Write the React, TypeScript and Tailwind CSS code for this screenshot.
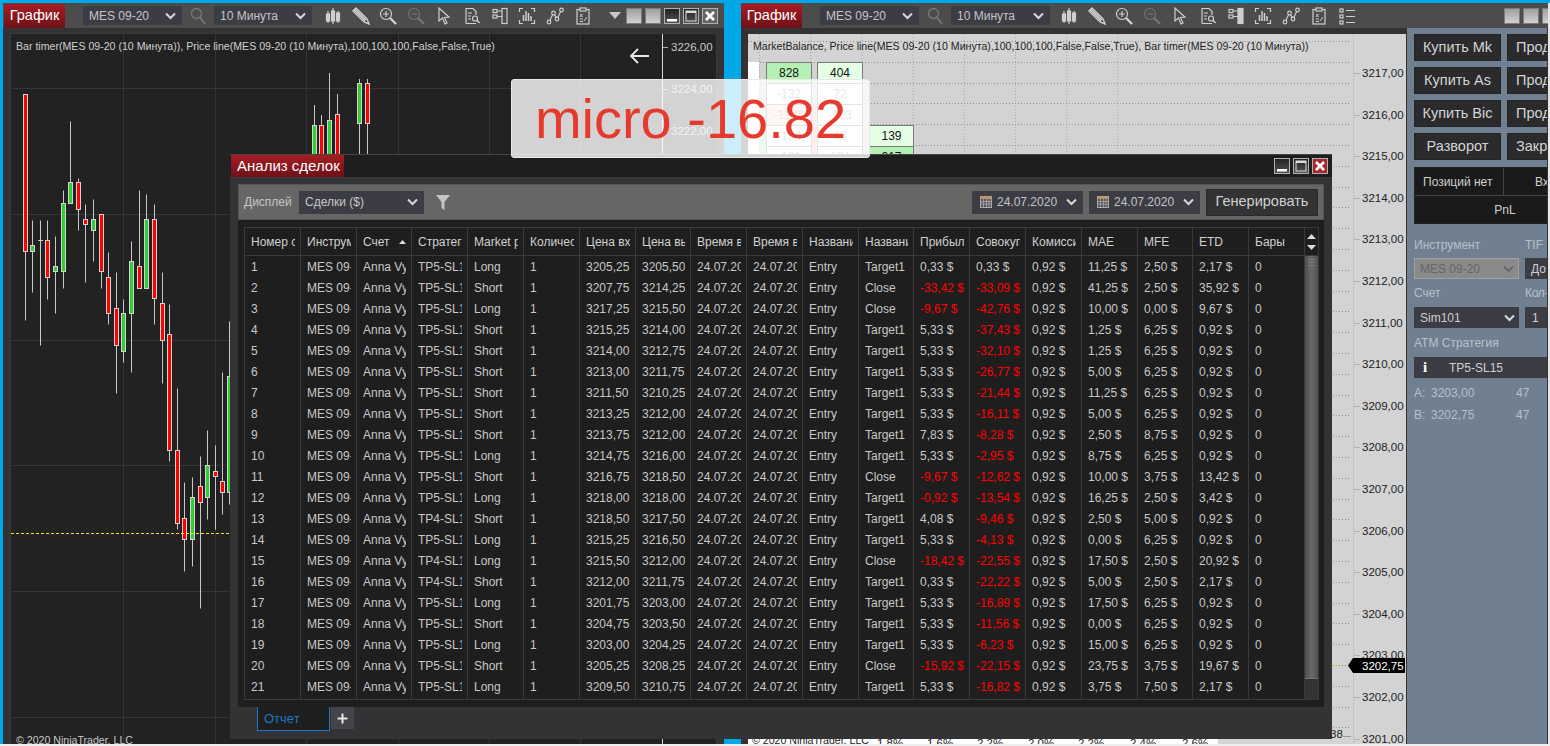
import React from "react";

const FONT = "font-['Liberation_Sans',Arial,sans-serif]";
const Y = (z: number) => Math.round(80 + z / 2.904) + 0.5;

// x, wickTop, wickBottom, bodyTop, bodyBottom, up (zoom units for y)
const candles: [number, number, number, number, number, number][] = [
  [25, 40, 696, 40, 497, 0], [32, 407, 617, 480, 497, 1], [47, 407, 635, 466, 573, 0],
  [55, 453, 678, 541, 556, 1], [63, 318, 603, 358, 556, 1], [70, 119, 358, 297, 358, 1],
  [78, 285, 437, 297, 376, 0], [85, 360, 588, 405, 419, 0], [93, 346, 527, 405, 437, 1],
  [101, 390, 603, 390, 556, 0], [108, 499, 710, 573, 678, 0], [116, 558, 908, 663, 770, 0],
  [123, 636, 818, 678, 786, 1], [131, 467, 848, 527, 678, 1], [139, 318, 603, 541, 603, 0],
  [146, 331, 603, 405, 603, 1], [154, 360, 710, 405, 634, 0], [162, 558, 880, 649, 756, 0],
  [169, 650, 1105, 739, 1075, 0], [177, 894, 1303, 1075, 1287, 0], [184, 1167, 1425, 1273, 1334, 0],
  [192, 1153, 1410, 1212, 1334, 1], [200, 1092, 1532, 1180, 1226, 0], [207, 1017, 1275, 1119, 1212, 1],
  [215, 1060, 1303, 1136, 1151, 0], [222, 848, 1259, 1165, 1197, 0], [229, 700, 1230, 860, 1197, 1],
];
const topCandles: [number, number, number, number][] = [
  [314, 105, 125, 1], [321, 115, 125, 0], [329, 73, 120, 1], [337, 94, 114, 0], [359, 79, 83, 1], [367, 79, 83, 0],
];

const rows: string[][] = [
  ["Long", "TP5", "3205,25", "3205,50", "Target1", "0,33", "0,33", "11,25", "2,50", "2,17"],
  ["Short", "TP5", "3207,75", "3214,25", "Close", "-33,42", "-33,09", "41,25", "2,50", "35,92"],
  ["Long", "TP5", "3217,25", "3215,50", "Close", "-9,67", "-42,76", "10,00", "0,00", "9,67"],
  ["Short", "TP5", "3215,25", "3214,00", "Target1", "5,33", "-37,43", "1,25", "6,25", "0,92"],
  ["Short", "TP5", "3214,00", "3212,75", "Target1", "5,33", "-32,10", "1,25", "6,25", "0,92"],
  ["Short", "TP5", "3213,00", "3211,75", "Target1", "5,33", "-26,77", "5,00", "6,25", "0,92"],
  ["Short", "TP5", "3211,50", "3210,25", "Target1", "5,33", "-21,44", "11,25", "6,25", "0,92"],
  ["Short", "TP5", "3213,25", "3212,00", "Target1", "5,33", "-16,11", "5,00", "6,25", "0,92"],
  ["Short", "TP5", "3213,75", "3212,00", "Target1", "7,83", "-8,28", "2,50", "8,75", "0,92"],
  ["Long", "TP5", "3214,75", "3216,00", "Target1", "5,33", "-2,95", "8,75", "6,25", "0,92"],
  ["Short", "TP5", "3216,75", "3218,50", "Close", "-9,67", "-12,62", "10,00", "3,75", "13,42"],
  ["Long", "TP5", "3218,00", "3218,00", "Target1", "-0,92", "-13,54", "16,25", "2,50", "3,42"],
  ["Short", "TP4", "3218,50", "3217,50", "Target1", "4,08", "-9,46", "2,50", "5,00", "0,92"],
  ["Long", "TP5", "3215,25", "3216,50", "Target1", "5,33", "-4,13", "0,00", "6,25", "0,92"],
  ["Long", "TP4", "3215,50", "3212,00", "Close", "-18,42", "-22,55", "17,50", "2,50", "20,92"],
  ["Short", "TP4", "3212,00", "3211,75", "Target1", "0,33", "-22,22", "5,00", "2,50", "2,17"],
  ["Long", "TP5", "3201,75", "3203,00", "Target1", "5,33", "-16,89", "17,50", "6,25", "0,92"],
  ["Short", "TP5", "3204,75", "3203,50", "Target1", "5,33", "-11,56", "0,00", "6,25", "0,92"],
  ["Long", "TP5", "3203,00", "3204,25", "Target1", "5,33", "-6,23", "15,00", "6,25", "0,92"],
  ["Short", "TP5", "3205,25", "3208,25", "Close", "-15,92", "-22,15", "23,75", "3,75", "19,67"],
  ["Long", "TP5", "3209,50", "3210,75", "Target1", "5,33", "-16,82", "3,75", "7,50", "2,17"],
];

const headers = ["Номер сделки", "Инструмент", "Счет", "Стратегия", "Market pos.", "Количество", "Цена входа", "Цена выхода", "Время входа", "Время выхода", "Название входа", "Название выхода", "Прибыль", "Совокупная", "Комиссия", "MAE", "MFE", "ETD", "Бары"];

const GRID = "grid grid-cols-[56px_56px_55px_56px_56px_56px_56px_55px_56px_56px_56px_55px_56px_56px_56px_56px_55px_56px_56px_13px]";

const Cell = ({ v, red }: { v: string; red?: boolean }) => (
  <div className={`h-[21px] border-r border-[#3a3a3a] pl-[6px] pr-[5px] pt-px leading-[21px] ${red ? "text-[#ff0000]" : "text-[#c8c8c8]"}`}>
    <div className="overflow-hidden whitespace-nowrap">{v}</div>
  </div>
);

const Chevron = ({ c = "#d8d8d8" }: { c?: string }) => (
  <svg width="11" height="8" viewBox="0 0 11 8" className="shrink-0"><path d="M1 1.5 L5.5 6 L10 1.5" fill="none" stroke={c} strokeWidth="2" /></svg>
);

const Select = ({ text, w }: { text: string; w: string }) => (
  <div className={`${w} h-[19px] shrink-0 bg-[#3c3c44] flex items-center pl-[6px] pr-[6px] text-[12px] text-[#c4c4c4] justify-between`}>
    <span className="whitespace-nowrap">{text}</span>
    <Chevron />
  </div>
);

const DateBox = () => (
  <div className="w-[111px] h-[23px] bg-[#3c3c44] flex items-center pl-[8px] pr-[6px] text-[12px] text-[#c4c4c4]">
    <svg width="12" height="12" viewBox="0 0 12 12" className="shrink-0">
      <rect x="0.5" y="0.5" width="11" height="11" fill="#55555c" stroke="#aaa" />
      <rect x="0.5" y="0.5" width="11" height="2.5" fill="#c09060" />
      <path d="M0 5.5H12M0 8H12M3.5 3V12M6.5 3V12M9 3V12" stroke="#aaa" strokeWidth="0.8" />
    </svg>
    <span className="whitespace-nowrap ml-[5px]">24.07.2020</span>
    <span className="ml-auto"><Chevron /></span>
  </div>
);

const S = "none";
const ic = { fill: S, stroke: "#cfcfcf", strokeWidth: 1.2 };
const Icon = ({ children, dim }: { children: React.ReactNode; dim?: boolean }) => (
  <div className="w-[27.8px] flex justify-center shrink-0">
    <svg width="18" height="18" viewBox="0 0 18 18" className={dim ? "opacity-30" : ""} {...ic}>{children}</svg>
  </div>
);
const Bars = () => <Icon><path d="M4 4V16M9 1V17M14 4V16" /><rect x="2.5" y="7" width="3" height="7" fill="#cfcfcf" /><rect x="7.5" y="4" width="3" height="10" fill="#cfcfcf" /><rect x="12.5" y="6" width="3" height="8" fill="#cfcfcf" /></Icon>;
const Pencil = () => <Icon><path d="M1 4 L4 1 L15 12 L17 17 L12 15 Z" strokeWidth="1.4" /><path d="M3 2 L14 13 M2 3 L13 14" /></Icon>;
const ZoomIn = () => <Icon><circle cx="7" cy="7" r="5.5" /><path d="M4 7H10M7 4V10" /><path d="M11 11 L17 17" strokeWidth="2.4" /></Icon>;
const ZoomOut = () => <Icon dim><circle cx="7" cy="7" r="5.5" /><path d="M4 7H10" /><path d="M11 11 L17 17" strokeWidth="2.4" /></Icon>;
const Cursor = () => <Icon><path d="M4 1 L4 14 L7.5 11 L10 17 L12 16 L9.5 10.5 L14 10 Z" /></Icon>;
const DocSearch = () => <Icon><path d="M3 16.5 V1.5 H10 L13 4.5 V8 M3 16.5 H13" /><path d="M5 6H9M5 9H8M5 12H8" /><circle cx="12" cy="11.5" r="2.5" /><path d="M14 13.5 L16.5 16" strokeWidth="1.6" /></Icon>;
const Panels = ({ fill }: { fill?: boolean }) => <Icon><rect x="11" y="1.5" width="5" height="15" fill={fill ? "#cfcfcf" : "none"} /><rect x="2" y="2.5" width="4" height="3" /><rect x="2" y="8" width="4" height="3" /><path d="M6 4H11M6 9.5H11" /></Icon>;
const BracketBars = () => <Icon><path d="M1.5 5V1.5H5M13 1.5H16.5V5M1.5 13V16.5H5M13 16.5H16.5V13" /><path d="M5.5 14V8M8 14V4M10.5 14V6M13 14V9" strokeWidth="1.5" /></Icon>;
const Nodes = () => <Icon><circle cx="3" cy="15" r="1.8" /><circle cx="7.5" cy="6" r="1.8" /><circle cx="11" cy="12" r="1.8" /><circle cx="15.5" cy="3" r="1.8" /><path d="M3.8 13.4 L6.7 7.6 M8.4 7.6 L10.1 10.4 M11.8 10.4 L14.7 4.6" /></Icon>;
const Clip = () => <Icon><rect x="3" y="2.5" width="12" height="14.5" /><rect x="6" y="1" width="6" height="3" fill="#4c4c4c" /><path d="M6 7 L8.5 10 M8.5 7 L6 10 M10 14 L13 10 M6 12H9M6 14.5H9" strokeWidth="1" /></Icon>;
const ListIcon = () => <Icon><rect x="2" y="2" width="3" height="3" /><rect x="2" y="8" width="3" height="3" /><rect x="2" y="14" width="3" height="3" /><path d="M8 3.5H17M8 9.5H17M8 15.5H17" /></Icon>;
const Search = () => (
  <div className="w-[32px] flex justify-center shrink-0">
    <svg width="16" height="18" viewBox="0 0 16 18" fill="none" stroke="#777" strokeWidth="1.3"><circle cx="6.5" cy="6.5" r="5" /><path d="M10 10.5 L15 17" strokeWidth="2" /></svg>
  </div>
);

const Tab = ({ text }: { text: string }) => (
  <div className="h-[24px] w-[61px] shrink-0 flex items-center justify-center text-white text-[14.5px] bg-gradient-to-b from-[#a81c24] to-[#6e1218] whitespace-nowrap">{text}</div>
);
const GreyBtn = () => <div className="w-[16px] h-[16px] shrink-0 bg-gradient-to-b from-[#a0a0a0] to-[#d0d0d0] border border-[#7c7c7c]" />;
const WinBtn = ({ kind, red }: { kind: "min" | "max" | "close"; red?: boolean }) => (
  <div className={`w-[16px] h-[16px] shrink-0 border border-[#b0b0b0] flex items-center justify-center ${red ? "bg-[#a8282c]" : kind === "close" ? "bg-[#666]" : "bg-gradient-to-b from-[#222] to-[#555]"}`}>
    <svg width="14" height="14" viewBox="0 0 14 14">
      {kind === "min" && <rect x="2" y="10" width="10" height="2.5" fill="#fff" />}
      {kind === "max" && <><rect x="2" y="2" width="10" height="10" fill="none" stroke="#ddd" /><rect x="2" y="2" width="10" height="2" fill="#ddd" /></>}
      {kind === "close" && <path d="M3 3 L11 11 M11 3 L3 11" stroke="#fff" strokeWidth="2.6" />}
    </svg>
  </div>
);

const LeftChart = () => {
  const vx = [123.5, 215.5, 306.5, 398.5, 489.5, 580.5];
  const hy = [88.5, 214.5, 340.5, 465.5, 591.5, 717.5];
  return (
    <svg width="705" height="710" viewBox="11 34 705 710" className="block bg-[#222222] outline outline-1 outline-[#3a3a3a]">
      {vx.map((x) => <line key={x} x1={x} x2={x} y1={34} y2={744} stroke="#353535" />)}
      {hy.map((y) => <line key={y} x1={11} x2={663} y1={y} y2={y} stroke="#353535" />)}
      <line x1={662.5} x2={662.5} y1={34} y2={744} stroke="#d8d8d8" />
      {[47, 89, 131].map((y, i) => (
        <g key={y}>
          <line x1={663} x2={668} y1={y + 0.5} y2={y + 0.5} stroke="#aaa" />
          <text x={671} y={y + 4} fontSize="11.5" fill="#c8c8c8">{["3226,00", "3224,00", "3222,00"][i]}</text>
        </g>
      ))}
      <text x={16} y={50} fontSize="10.6" fill="#d0d0d0">Bar timer(MES 09-20 (10 Минута)), Price line(MES 09-20 (10 Минута),100,100,100,False,False,True)</text>
      <path d="M649 56 H631 M638 49 L631 56 L638 63" fill="none" stroke="#e8e8e8" strokeWidth="1.8" />
      <line x1={40.5} x2={40.5} y1={Y(407)} y2={Y(771)} stroke="#ccc" />
      <line x1={38} x2={43} y1={Y(466)} y2={Y(466)} stroke="#ccc" />
      {candles.map(([x, wt, wb, bt, bb, up]) => (
        <g key={x}>
          <line x1={x + 0.5} x2={x + 0.5} y1={Y(wt)} y2={Y(wb)} stroke="#c8c8c8" />
          <rect x={x - 1.5} y={Y(bt)} width={4} height={Y(bb) - Y(bt)} fill={up ? "#32cd32" : "#ff0000"} stroke="#d4d4d4" />
        </g>
      ))}
      {topCandles.map(([x, wt, bt, up]) => (
        <g key={x}>
          <line x1={x + 0.5} x2={x + 0.5} y1={wt} y2={156} stroke="#c8c8c8" />
          <rect x={x - 1.5} y={bt + 0.5} width={4} height={40} fill={up ? "#32cd32" : "#ff0000"} stroke="#d4d4d4" />
        </g>
      ))}
      <line x1={11} x2={232} y1={533.5} y2={533.5} stroke="#f2e820" strokeDasharray="3 2" />
      <text x={16} y={744} fontSize="10.6" fill="#c8c8c8">© 2020 NinjaTrader, LLC</text>
    </svg>
  );
};

const box = (x: number, y: number, w: number, h: number, fill: string, t: string, tc: string) => (
  <g key={`${x}-${y}`}>
    <rect x={x + 0.5} y={y + 0.5} width={w} height={h} fill={fill} stroke="#7a7a7a" />
    <text x={x + w / 2 + 0.5} y={y + h / 2 + 4.5} textAnchor="middle" fontSize="12" fill={tc}>{t}</text>
  </g>
);

const RightChart = () => {
  const vs = Array.from({ length: 8 }, (_, i) => 759.5 + i * 51.2);
  const hs = Array.from({ length: 34 }, (_, i) => 41.5 + Math.round(i * 20.8));
  const prices = ["3217", "3216", "3215", "3214", "3213", "3212", "3211", "3210", "3209", "3208", "3207", "3206", "3205", "3204", "3203", "3202", "3201"];
  return (
    <svg width="658" height="710" viewBox="748 34 658 710" className="block bg-[#d3d3d3]">
      {vs.map((x) => <line key={x} x1={x} x2={x} y1={34} y2={744} stroke="#a8a8a8" strokeDasharray="1 2" />)}
      {hs.map((y) => <line key={y} x1={748} x2={1350} y1={y} y2={y} stroke="#909090" strokeDasharray="1 2" />)}
      <line x1={1353.5} x2={1353.5} y1={34} y2={744} stroke="#c4c4c4" />
      {prices.map((p, i) => {
        const y = Math.round(73 + i * 41.6);
        return (
          <g key={p}>
            <line x1={1354} x2={1360} y1={y + 0.5} y2={y + 0.5} stroke="#b0b0b0" />
            <text x={1362} y={y + 4} fontSize="11.5" fill="#222">{p},00</text>
          </g>
        );
      })}
      <text x={753} y={50} fontSize="10.6" fill="#222">MarketBalance, Price line(MES 09-20 (10 Минута),100,100,100,False,False,True), Bar timer(MES 09-20 (10 Минута))</text>
      <rect x={748} y={62} width={11} height={96} fill="#ffffff" />
      <rect x={761} y={125} width={5} height={33} fill="#a8e0a8" />
      <rect x={811} y={104} width={7} height={54} fill="#ffb0b0" />
      {box(766, 62, 45, 21, "#b4f0b4", "828", "#111")}
      {box(817, 62, 45, 21, "#e4ffe4", "404", "#111")}
      {box(766, 83, 45, 21, "#ffffff", "-132", "#888")}
      {box(817, 83, 45, 21, "#ffffff", "72", "#888")}
      {box(766, 104, 45, 21, "#ffd4d4", "-1240", "#888")}
      {box(817, 104, 45, 21, "#ffffff", "-123", "#888")}
      {box(766, 125, 45, 21, "#ffffff", "-134", "#888")}
      {box(817, 125, 45, 21, "#ffffff", "43", "#888")}
      {box(869, 125, 44, 21, "#e4ffe4", "139", "#111")}
      {box(766, 146, 45, 21, "#ffffff", "-131", "#888")}
      {box(817, 146, 45, 21, "#ffffff", "174", "#888")}
      {box(869, 146, 44, 21, "#b4f0b4", "217", "#111")}
      <line x1={1332} x2={1347} y1={665.5} y2={665.5} stroke="#e8e020" strokeDasharray="1 2" />
      <path d="M1348 665.5 L1353 658 H1405 V673 H1353 Z" fill="#000" />
      <text x={1362} y={670} fontSize="11.5" fill="#fff">3202,75</text>
      <rect x={748} y={738} width={470} height={6} fill="#fff" />
      <text x={752} y={744} fontSize="10.6" fill="#222">© 2020 NinjaTrader, LLC</text>
      {[["1,8%", 877], ["1,6%", 927], ["2,2%", 977], ["2,0%", 1028], ["2,2%", 1078], ["2,4%", 1130], ["2,6%", 1182]].map(([t, x]) => (
        <text key={x as number} x={x as number} y={747} fontSize="11.5" fill="#222">{t}</text>
      ))}
      <text x={1330} y={738} fontSize="11.5" fill="#222">38</text>
      <line x1={1340} x2={1351} y1={736.5} y2={736.5} stroke="#999" />
    </svg>
  );
};

const PanelBtn = ({ t }: { t: string }) => (
  <div className="w-[87px] h-[27px] shrink-0 bg-[#2b2b2d] border border-[#242426] pt-px flex items-center justify-center text-[14.5px] text-[#d4d4d4] overflow-hidden">
    <span className="w-[70px] overflow-hidden whitespace-nowrap text-center">{t}</span>
  </div>
);

const SidePanel = () => (
  <div className="w-[141px] bg-[#708090] pl-[7px] pt-[6px] text-[12px] overflow-hidden border-l border-[#333]">
    <div className="flex flex-col gap-[6px] w-[200px]">
      {[["Купить Mk", "Прод"], ["Купить As", "Прод"], ["Купить Bic", "Прод"], ["Разворот", "Закр"]].map(([a, b]) => (
        <div key={a} className="flex gap-[6px]"><PanelBtn t={a} /><div className="w-[87px] h-[27px] pt-px bg-[#2b2b2d] border border-[#242426] flex items-center pl-[8px] text-[14.5px] text-[#d4d4d4]">{b}</div></div>
      ))}
    </div>
    <div className="w-[182px] mt-[7px] border border-[#222] bg-[#1a1a1a] text-[#d0d0d0]">
      <div className="flex h-[28px] border-b border-[#444]">
        <div className="w-[89px] border-r border-[#444] flex items-center pl-[8px] whitespace-nowrap">Позиций нет</div>
        <div className="flex items-center pl-[31px]">Вх</div>
      </div>
      <div className="h-[27px] flex items-center justify-center">PnL</div>
    </div>
    <div className="flex mt-[12px] w-[200px] text-[#b6c0ca]"><div className="w-[111px]">Инструмент</div><div>TIF</div></div>
    <div className="flex mt-[4px] w-[200px]">
      <div className="w-[105px] h-[21px] bg-[#8a8a8a] border border-[#a0a0a0] flex items-center justify-between pl-[5px] pr-[4px] text-[#666]">
        <span>MES 09-20</span><Chevron c="#666" />
      </div>
      <div className="ml-[6px] w-[60px] h-[21px] bg-[#3c3c44] flex items-center pl-[6px] text-[#d0d0d0]">До</div>
    </div>
    <div className="flex mt-[5px] w-[200px] text-[#b6c0ca]"><div className="w-[111px]">Счет</div><div className="tracking-[-0.3px]">Кол-во</div></div>
    <div className="flex mt-[5px] w-[200px]">
      <div className="w-[105px] h-[21px] bg-[#3c3c44] flex items-center justify-between pl-[6px] pr-[4px] text-[#d0d0d0]">
        <span>Sim101</span><Chevron />
      </div>
      <div className="ml-[6px] w-[60px] h-[21px] bg-[#3c3c44] flex items-center pl-[7px] text-[#d0d0d0]">1</div>
    </div>
    <div className="mt-[8px] text-[#b6c0ca] leading-[14px]">ATM Стратегия</div>
    <div className="mt-[7px] w-[160px] h-[21px] bg-[#3c3c44] flex items-center text-[#d0d0d0]">
      <span className="w-[35px] pl-[9px] font-['Liberation_Serif',serif] font-bold text-[15px] text-white">i</span>
      <span>TP5-SL15</span>
    </div>
    <div className="mt-[8px] flex w-[130px] text-[#b6c0ca] leading-[14px]"><span className="w-[17px]">A:</span><span className="w-[85px]">3203,00</span><span>47</span></div>
    <div className="mt-[8px] flex w-[130px] text-[#b6c0ca] leading-[14px]"><span className="w-[17px]">B:</span><span className="w-[85px]">3202,75</span><span>47</span></div>
  </div>
);

const TradeWindow = () => (
  <div className="absolute left-[230px] top-[154px] w-[1102px] h-[585px] bg-[#333335] border-t border-[#444] flex flex-col text-[12px]">
    <div className="h-[22px] shrink-0 bg-[#1e1e1e] flex items-start border-b border-[#3a3a3a] box-content">
      <div className="h-[22px] w-[113px] px-[6px] flex items-center text-white text-[15px] bg-gradient-to-b from-[#a81c24] to-[#6e1218] whitespace-nowrap ml-px">Анализ сделок</div>
      <div className="ml-auto mr-[4px] mt-[3px] flex gap-[3px]">
        <WinBtn kind="min" /><WinBtn kind="max" /><WinBtn kind="close" red />
      </div>
    </div>
    <div className="mx-[8px] mt-[6px] h-[523px] flex flex-col bg-[#1e1e1e]">
      <div className="h-[36px] shrink-0 bg-[#666666] border border-[#555] flex items-center pl-[5px] pr-[5px]">
        <span className="text-[#c8c8c8] w-[55px]">Дисплей</span>
        <div className="w-[125px] h-[23px] bg-[#3c3c44] flex items-center justify-between pl-[6px] pr-[6px] text-[#c8c8c8]">
          <span>Сделки ($)</span><Chevron />
        </div>
        <svg width="14" height="15" viewBox="0 0 14 15" className="ml-[12px]"><path d="M0 0 H14 L8.5 7 V15 L5.5 13 V7 Z" fill="#c4c4c4" /></svg>
        <div className="ml-auto flex items-center gap-[6px]">
          <DateBox /><DateBox />
          <div className="w-[112px] h-[27px] bg-[#333335] border border-[#2a2a2a] flex items-center justify-center text-[14.5px] text-[#d0d0d0]">Генерировать</div>
        </div>
      </div>
      <div className="mx-[6px] mt-[7px] w-[1075px] h-[473px] border border-[#3a3a3a] bg-[#1e1e1e]">
        <div className={`${GRID} h-[28px] border-b border-[#3a3a3a] text-[#d0d0d0]`}>
          {headers.map((h) => (
            <div key={h} className="border-r border-[#3a3a3a] pl-[6px] pr-[5px] pt-px leading-[27px] relative">
              <div className="overflow-hidden whitespace-nowrap">{h}</div>
              {h === "Счет" && <svg width="7" height="4" viewBox="0 0 7 4" className="absolute right-[5px] top-[12px]"><path d="M0 4 L3.5 0 L7 4 Z" fill="#ddd" /></svg>}
            </div>
          ))}
          <div className="flex flex-col items-center justify-center gap-[6px]">
            <svg width="9" height="5" viewBox="0 0 9 5"><path d="M0 5 L4.5 0 L9 5 Z" fill="#ddd" /></svg>
            <svg width="9" height="5" viewBox="0 0 9 5"><path d="M0 0 L4.5 5 L9 0 Z" fill="#ddd" /></svg>
          </div>
        </div>
        <div className="relative">
          <div className={GRID}>
            {rows.map((r, i) => (
              <React.Fragment key={i}>
                <Cell v={String(i + 1)} />
                <Cell v="MES 09-20" />
                <Cell v="Anna Vyshnevska" />
                <Cell v={`${r[1]}-SL15`} />
                <Cell v={r[0]} />
                <Cell v="1" />
                <Cell v={r[2]} />
                <Cell v={r[3]} />
                <Cell v="24.07.2020" />
                <Cell v="24.07.2020" />
                <Cell v="Entry" />
                <Cell v={r[4]} />
                <Cell v={`${r[5]} $`} red={r[5][0] === "-"} />
                <Cell v={`${r[6]} $`} red={r[6][0] === "-"} />
                <Cell v="0,92 $" />
                <Cell v={`${r[7]} $`} />
                <Cell v={`${r[8]} $`} />
                <Cell v={`${r[9]} $`} />
                <Cell v="0" />
                <div className="h-[21px]" />
              </React.Fragment>
            ))}
            {headers.map((h) => <div key={h} className="h-[2px] border-r border-[#3a3a3a]" />)}
          </div>
          <div className="absolute right-0 top-0 bottom-0 w-[13px] bg-[#333335]">
            <div className="h-[423px] bg-gradient-to-r from-[#4e4e4e] via-[#6a6a6a] to-[#505050] border-b border-[#777] flex flex-col items-center pt-[3px] gap-[2px]">
              <div className="w-[8px] h-px bg-[#777]" /><div className="w-[8px] h-px bg-[#777]" /><div className="w-[8px] h-px bg-[#777]" />
            </div>
          </div>
        </div>
      </div>
    </div>
    <div className="flex pl-[27px] items-start">
      <div className="w-[73px] h-[24px] bg-[#1e1e1e] border-x border-b border-[#1a78c8] flex items-center pl-[6px] text-[13px] text-[#1a78c8]">Отчет</div>
      <div className="w-[23px] h-[22px] ml-px bg-[#44444a] flex items-center justify-center">
        <svg width="11" height="11" viewBox="0 0 11 11"><path d="M5.5 0.5V10.5M0.5 5.5H10.5" stroke="#e8e8e8" strokeWidth="2" /></svg>
      </div>
    </div>
  </div>
);

export default function App() {
  return (
    <div className={`relative w-[1550px] h-[746px] overflow-hidden bg-[#00a8e8] ${FONT}`}>
      {/* left chart window */}
      <div className="absolute left-[3px] top-[3px] w-[721px] h-[743px] bg-[#333335] flex flex-col">
        <div className="h-[25px] shrink-0 bg-[#4c4c4c] flex items-center pl-px">
          <Tab text="График" />
          <div className="ml-[18px] flex items-center shrink-0">
            <Select text="MES 09-20" w="w-[99px]" /><Search /><Select text="10 Минута" w="w-[98px]" />
          </div>
          <div className="ml-[7px] flex items-center">
            <Bars /><Pencil /><ZoomIn /><ZoomOut /><Cursor /><DocSearch /><Panels /><BracketBars /><Nodes /><Clip />
          </div>
          <svg width="12" height="7" viewBox="0 0 12 7" className="ml-[12px]"><path d="M0 0 H12 L6 7 Z" fill="#c8c8c8" /></svg>
          <div className="ml-[5px] flex gap-[3px]"><GreyBtn /><GreyBtn /><WinBtn kind="min" /><WinBtn kind="max" /><WinBtn kind="close" /></div>
        </div>
        <div className="pl-[8px] pt-[6px]"><LeftChart /></div>
      </div>

      {/* right chart window */}
      <div className="absolute left-[741px] top-[3px] w-[807px] h-[743px] bg-[#333335] flex flex-col overflow-hidden">
        <div className="h-[25px] shrink-0 bg-[#4c4c4c] flex items-center">
          <Tab text="График" />
          <div className="ml-[18px] flex items-center shrink-0">
            <Select text="MES 09-20" w="w-[99px]" /><Search /><Select text="10 Минута" w="w-[99px]" />
          </div>
          <div className="ml-[5px] flex items-center">
            <Bars /><Pencil /><ZoomIn /><ZoomOut /><Cursor /><DocSearch /><Panels fill /><BracketBars /><Nodes /><Clip /><ListIcon />
          </div>
          <div className="ml-[143px] flex gap-[3px] shrink-0"><GreyBtn /><GreyBtn /><GreyBtn /></div>
        </div>
        <div className="flex flex-1 min-h-0">
          <div className="w-[665px] pl-[7px] pt-[6px] shrink-0"><RightChart /></div>
          <SidePanel />
        </div>
      </div>

      <div className="absolute right-0 top-[3px] w-[2px] h-[743px] bg-[#e6e6e6]" />
      <div className="absolute left-0 bottom-0 w-[1550px] h-[2px] bg-[#eeeeee]" />

      <TradeWindow />

      {/* floating label */}
      <div className="absolute left-[511px] top-[79px] w-[359px] h-[79px] rounded-[3px] bg-white/80 border border-[#e8e8e8] flex items-center justify-center text-[56px] text-[#e63a2e] leading-none whitespace-nowrap">micro -16.82</div>
    </div>
  );
}
